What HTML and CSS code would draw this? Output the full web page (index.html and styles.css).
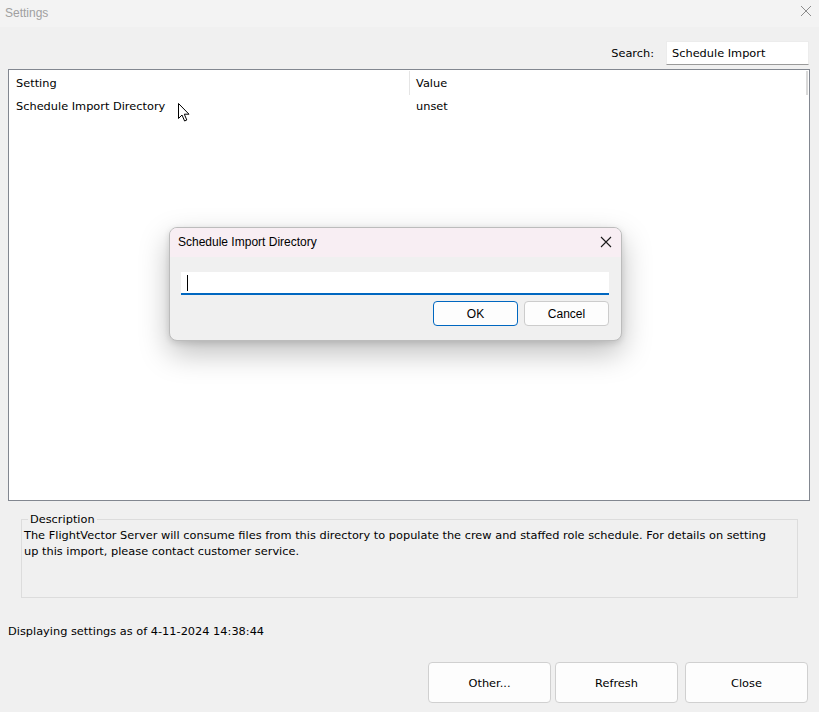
FILE: index.html
```html
<!DOCTYPE html>
<html lang="en">

<head>
    <meta charset="UTF-8">
    <meta name="viewport" content="width=device-width, initial-scale=1.0">
    <title>Settings</title>
    <link rel="stylesheet" href="styles.css">
</head>

<body>
    <div class="window">
        <div class="titlebar">
            <span class="title">Settings</span>
            <svg class="win-close" width="12" height="12" viewBox="0 0 12 12">
                <path d="M1 1 L11 11 M11 1 L1 11" stroke="#8c8c8c" stroke-width="1" fill="none" />
            </svg>
        </div>

        <div class="search-row">
            <label for="search">Search:</label>
            <div class="search-box" id="search">Schedule Import</div>
        </div>

        <div class="list">
            <div class="list-head">
                <div class="col col-setting">Setting</div>
                <div class="col col-value">Value</div>
            </div>
            <div class="list-row">
                <div class="col col-setting">Schedule Import Directory</div>
                <div class="col col-value">unset</div>
            </div>
            <div class="scroll-thumb"></div>
        </div>

        <fieldset class="desc">
            <legend>Description</legend>
            <p>The FlightVector Server will consume files from this directory to populate the crew and staffed role schedule. For details on setting up this import, please contact customer service.</p>
        </fieldset>

        <div class="status">Displaying settings as of 4-11-2024 14:38:44</div>

        <div class="buttons">
            <button class="btn">Other...</button>
            <button class="btn">Refresh</button>
            <button class="btn btn-close">Close</button>
        </div>
    </div>

    <!-- input prompt shown over the settings window -->
    <div class="dialog">
        <div class="dialog-title">
            <span>Schedule Import Directory</span>
            <svg class="dlg-close" width="12" height="12" viewBox="0 0 12 12">
                <path d="M1 1 L11 11 M11 1 L1 11" stroke="#1a1a1a" stroke-width="1.1" fill="none" />
            </svg>
        </div>
        <div class="dialog-body">
            <div class="dlg-input"><span class="caret"></span></div>
            <div class="dlg-buttons">
                <button class="dbtn dbtn-ok">OK</button>
                <button class="dbtn">Cancel</button>
            </div>
        </div>
    </div>

    <svg class="pointer" width="14" height="21" viewBox="0 0 14 21">
        <path d="M1.5 1.5 L1.5 16.5 L5 13 L7.6 19 L9.8 18 L7.3 12.2 L12 12.2 Z" fill="#fff" stroke="#000" stroke-width="1" stroke-linejoin="miter" />
    </svg>
</body>

</html>
```

FILE: styles.css
```css
body {
    margin: 0;
    background-color: #f0f0f0;
    font-family: 'DejaVu Sans', sans-serif;
    font-size: 11.35px;
    color: #000;
}

.window {
    width: 819px;
    height: 712px;
    display: flex;
    flex-direction: column;
    background-color: #f0f0f0;
}

.titlebar {
    height: 27px;
    display: flex;
    align-items: center;
    justify-content: space-between;
    padding: 0 7px 0 5px;
    background-color: #f3f3f3;
    font-family: 'Liberation Sans', sans-serif;
    font-size: 12px;
    color: #a0a0a0;
    box-sizing: border-box;
}

.title {
    margin-top: -2px;
}

.win-close {
    margin-top: -5px;
}

.search-row {
    margin-top: 14px;
    padding-right: 10px;
    display: flex;
    justify-content: flex-end;
    align-items: center;
    gap: 12px;
    height: 24px;
}

.search-box {
    width: 143px;
    height: 24px;
    box-sizing: border-box;
    padding: 3px 5px;
    background-color: white;
    border: 1px solid #ececec;
    border-bottom: 1px solid #9a9a9a;
    line-height: 16px;
}

.list {
    position: relative;
    margin: 4px 9px 0 8px;
    height: 432px;
    box-sizing: border-box;
    border: 1px solid #828790;
    background-color: white;
}

.list-head,
.list-row {
    display: flex;
}

.list-head {
    height: 25px;
    padding-top: 1px;
    box-sizing: border-box;
    line-height: 24px;
}

.list-row {
    height: 22px;
    line-height: 22px;
}

.col-setting {
    width: 401px;
    padding-left: 7px;
    box-sizing: border-box;
}

.list-head .col-setting {
    border-right: 1px solid #e5e5e5;
}

.col-value {
    padding-left: 6px;
}

.scroll-thumb {
    position: absolute;
    top: 1px;
    right: 1px;
    width: 2px;
    height: 24px;
    background-color: #d9d9d9;
}

.desc {
    margin: 11px 21px 0 21px;
    padding: 0 2px;
    border: 1px solid #dcdcdc;
}

.desc legend {
    margin-left: 4px;
    padding: 0 2px;
    line-height: 14px;
}

.desc p {
    margin: 0;
    padding: 1px 16px 0 0;
    height: 70px;
    line-height: 16px;
}

.status {
    margin-top: 25px;
    padding-left: 8px;
    line-height: 16px;
}

.buttons {
    margin-top: 23px;
    padding-right: 11px;
    display: flex;
    justify-content: flex-end;
    gap: 4px;
}

.btn {
    width: 123px;
    height: 41px;
    border: 1px solid #d0d0d0;
    border-radius: 4px;
    background-color: #fdfdfd;
    font-family: 'DejaVu Sans', sans-serif;
    font-size: 11.35px;
    color: #000;
}

.btn-close {
    margin-left: 3px;
}

.dialog {
    position: absolute;
    left: 169px;
    top: 227px;
    width: 453px;
    height: 114px;
    box-sizing: border-box;
    border: 1px solid #bcbcbc;
    border-radius: 8px;
    overflow: hidden;
    background-color: #f0f0f0;
    font-family: 'Liberation Sans', sans-serif;
    font-size: 12px;
    box-shadow: 0 12px 30px rgba(0, 0, 0, 0.26), 0 2px 6px rgba(0, 0, 0, 0.12);
}

.dialog-title {
    height: 29px;
    display: flex;
    align-items: center;
    justify-content: space-between;
    padding: 0 9px 2px 8px;
    box-sizing: border-box;
    background-color: #f8eef3;
}

.dialog-body {
    padding: 15px 12px 0 11px;
}

.dlg-input {
    height: 23px;
    box-sizing: border-box;
    background-color: white;
    border-bottom: 2px solid #0067c0;
    padding: 3px 0 0 6px;
}

.caret {
    display: block;
    width: 1px;
    height: 16px;
    background-color: #000;
}

.dlg-buttons {
    margin-top: 6px;
    display: flex;
    justify-content: flex-end;
    gap: 6px;
}

.dbtn {
    width: 85px;
    height: 25px;
    border: 1px solid #cccccc;
    border-radius: 4px;
    background-color: #fdfdfd;
    font-family: 'Liberation Sans', sans-serif;
    font-size: 12px;
    color: #000;
}

.dbtn-ok {
    border-color: #0067c0;
}

.pointer {
    position: absolute;
    left: 177px;
    top: 102px;
}
```
